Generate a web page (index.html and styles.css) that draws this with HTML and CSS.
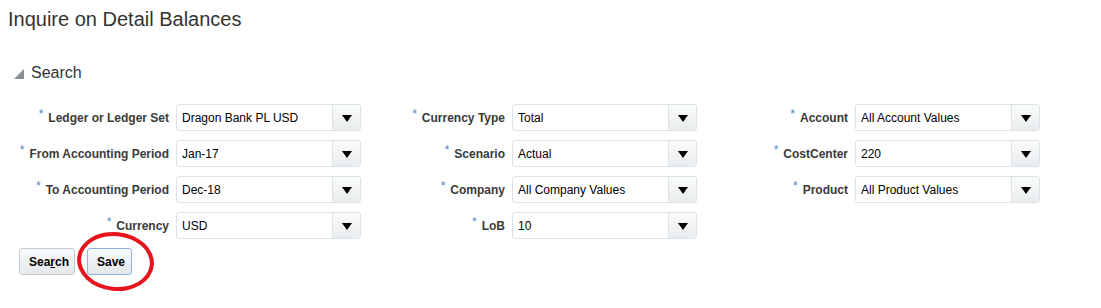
FILE: index.html
```html
<!DOCTYPE html>
<html lang="en">
<head>
  <meta charset="UTF-8">
  <title>Inquire on Detail Balances</title>
  <link rel="stylesheet" href="styles.css">
</head>
<body>

  <h1 class="page-title">Inquire on Detail Balances</h1>

  <div class="section-head">
    <svg class="disclosure" width="10" height="10" viewBox="0 0 10 10"><polygon points="0,10 10,10 10,0" fill="#8a8d90"/></svg>
    <span>Search</span>
  </div>

  <div class="search-form">
    <div class="col col1">
      <div class="field">
        <label><span class="req">*</span>Ledger or Ledger Set</label>
        <div class="select"><span class="value">Dragon Bank PL USD</span><span class="drop"></span></div>
      </div>
      <div class="field">
        <label><span class="req">*</span>From Accounting Period</label>
        <div class="select"><span class="value">Jan-17</span><span class="drop"></span></div>
      </div>
      <div class="field">
        <label><span class="req">*</span>To Accounting Period</label>
        <div class="select"><span class="value">Dec-18</span><span class="drop"></span></div>
      </div>
      <div class="field">
        <label><span class="req">*</span>Currency</label>
        <div class="select"><span class="value">USD</span><span class="drop"></span></div>
      </div>
    </div>

    <div class="col col2">
      <div class="field">
        <label><span class="req">*</span>Currency Type</label>
        <div class="select"><span class="value">Total</span><span class="drop"></span></div>
      </div>
      <div class="field">
        <label><span class="req">*</span>Scenario</label>
        <div class="select"><span class="value">Actual</span><span class="drop"></span></div>
      </div>
      <div class="field">
        <label><span class="req">*</span>Company</label>
        <div class="select"><span class="value">All Company Values</span><span class="drop"></span></div>
      </div>
      <div class="field">
        <label><span class="req">*</span>LoB</label>
        <div class="select"><span class="value">10</span><span class="drop"></span></div>
      </div>
    </div>

    <div class="col col3">
      <div class="field">
        <label><span class="req">*</span>Account</label>
        <div class="select"><span class="value">All Account Values</span><span class="drop"></span></div>
      </div>
      <div class="field">
        <label><span class="req">*</span>CostCenter</label>
        <div class="select"><span class="value">220</span><span class="drop"></span></div>
      </div>
      <div class="field">
        <label><span class="req">*</span>Product</label>
        <div class="select"><span class="value">All Product Values</span><span class="drop"></span></div>
      </div>
    </div>
  </div>

  <div class="buttons">
    <button class="btn btn-search">Sea<u>r</u>ch</button>
    <button class="btn btn-save">Save</button>
    <!-- red mark drawn over the Save button -->
    <div class="circle-mark"></div>
  </div>

</body>
</html>
```

FILE: styles.css
```css
html, body {
  min-height: 100%;
  height: 100%;
}

body {
  font-family: 'Liberation Sans', Arial, sans-serif;
  background-color: #fff;
  color: #333;
  margin: 0;
  padding: 0 8px;
  box-sizing: border-box;
}

.page-title {
  font-size: 20px;
  font-weight: normal;
  line-height: 24px;
  margin: 7px 0 0;
  color: #333;
}

.section-head {
  display: flex;
  align-items: center;
  margin-top: 32px;
  margin-left: 6px;
  height: 20px;
  font-size: 16px;
  color: #333;
}

.section-head .disclosure {
  margin-right: 7px;
  margin-top: 1px;
}

.search-form {
  display: flex;
  margin-top: 21px;
}

.col {
  display: flex;
  flex-direction: column;
  gap: 9px;
}

.col1 { width: 353px; }
.col2 { width: 336px; }
.col3 { width: 343px; }

.field {
  display: flex;
  align-items: center;
  gap: 7px;
  height: 27px;
}

.field label {
  flex: 1;
  text-align: right;
  font-size: 12px;
  font-weight: bold;
  color: #3a3a3a;
  white-space: nowrap;
}

.req {
  color: #4a86c8;
  font-weight: normal;
  font-size: 12px;
  position: relative;
  top: -4px;
  margin-right: 5px;
}

.select {
  width: 185px;
  height: 27px;
  box-sizing: border-box;
  display: flex;
  border: 1px solid #dce3e8;
  border-radius: 3px;
  background: #fff;
}

.select .value {
  flex: 1;
  font-size: 12px;
  color: #000;
  line-height: 26px;
  padding-left: 5px;
  white-space: nowrap;
}

.select .drop {
  width: 27px;
  border-left: 1px solid #dce3e8;
  border-radius: 0 3px 3px 0;
  background: linear-gradient(#fafbfb, #e9ecee);
  display: flex;
  align-items: center;
  justify-content: center;
}

.select .drop::after {
  content: "";
  width: 0;
  height: 0;
  margin-top: 2px;
  border-left: 5px solid transparent;
  border-right: 5px solid transparent;
  border-top: 7px solid #000;
}

.buttons {
  position: relative;
  display: flex;
  gap: 12px;
  margin-top: 9px;
  padding-left: 11px;
}

.btn {
  font-family: 'Liberation Sans', Arial, sans-serif;
  font-size: 12px;
  font-weight: bold;
  color: #000;
  height: 27px;
  padding: 0 9px;
  border: 1px solid #c4ccd3;
  border-radius: 3px;
  background: linear-gradient(#f9fafb, #e4e8eb);
}

.btn-search { width: 56px; }

.btn-save {
  width: 45px;
  border-color: #8db3e6;
}

.circle-mark {
  position: absolute;
  left: 69px;
  top: -16px;
  width: 77px;
  height: 59px;
  border: 4px solid #e8141d;
  border-radius: 50%;
  box-sizing: border-box;
  transform: rotate(6deg);
}
```
